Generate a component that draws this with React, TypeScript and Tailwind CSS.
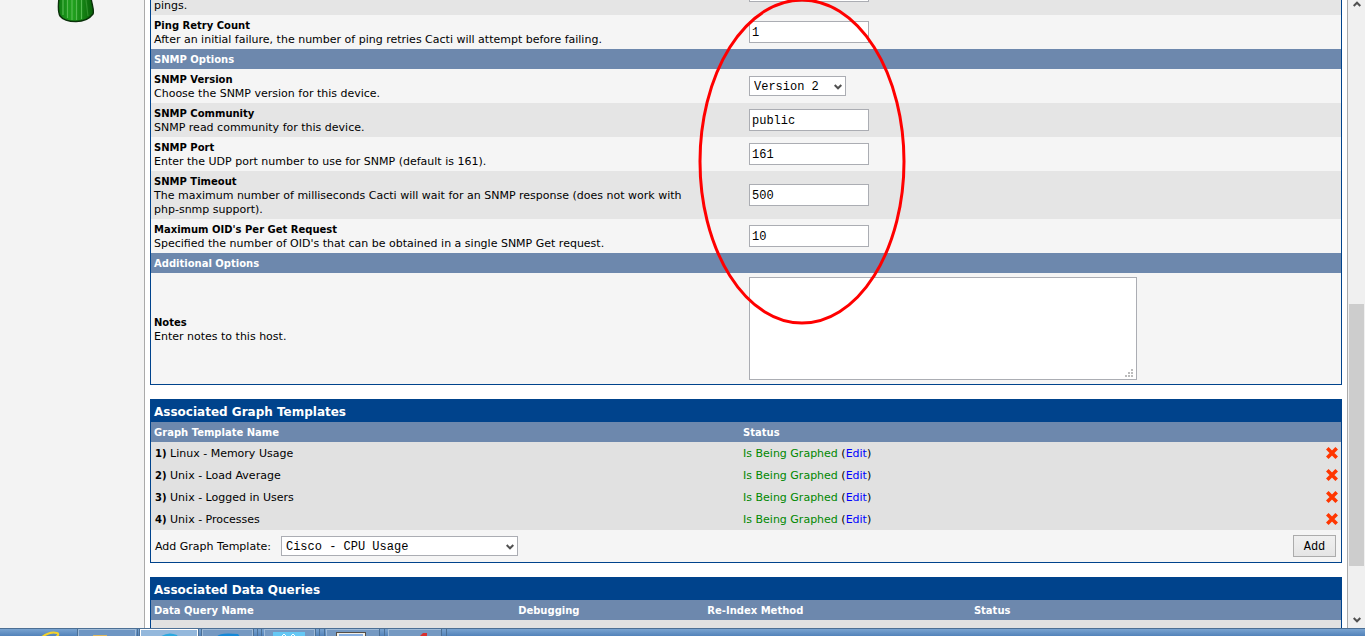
import { useState } from 'react'
import type { ReactNode } from 'react'

type Field = { id: string; label: string; hint: ReactNode; value: string; shade: string }

const snmpFields: Field[] = [
  { id: 'snmp_community', label: 'SNMP Community', hint: 'SNMP read community for this device.', value: 'public', shade: 'bg-[#e5e5e5]' },
  { id: 'snmp_port', label: 'SNMP Port', hint: 'Enter the UDP port number to use for SNMP (default is 161).', value: '161', shade: 'bg-[#f5f5f5]' },
  {
    id: 'snmp_timeout',
    label: 'SNMP Timeout',
    hint: <>The maximum number of milliseconds Cacti will wait for an SNMP response (does not work with<br />php-snmp support).</>,
    value: '500',
    shade: 'bg-[#e5e5e5]',
  },
  { id: 'max_oids', label: "Maximum OID's Per Get Request", hint: "Specified the number of OID's that can be obtained in a single SNMP Get request.", value: '10', shade: 'bg-[#f5f5f5]' },
]

const graphTemplates = ['Linux - Memory Usage', 'Unix - Load Average', 'Unix - Logged in Users', 'Unix - Processes']

const control = "border border-[#abadb3] bg-white font-['Liberation_Mono',monospace] text-xs text-black outline-none"

function FormRow({ id, label, hint, shade, children }: { id: string; label: string; hint: ReactNode; shade: string; children: ReactNode }) {
  return (
    <div className={`flex items-center ${shade}`}>
      <div className="w-1/2 px-[3px] pt-1 pb-[2px]">
        <label htmlFor={id} className="block text-[10px] leading-[14px] font-bold">{label}</label>
        <div>{hint}</div>
      </div>
      <div className="w-1/2 px-[3px] py-[3px]">{children}</div>
    </div>
  )
}

function TextField({ id, value }: { id: string; value: string }) {
  return <input id={id} type="text" defaultValue={value} className={`block h-[22px] w-[120px] px-[2px] pt-[2px] ${control}`} />
}

function Chevron({ className }: { className: string }) {
  return (
    <svg viewBox="0 0 8 6" className={className} fill="none" stroke="#505050" strokeWidth="2" aria-hidden="true">
      <path d="M0.7 1 L4 4.3 L7.3 1" />
    </svg>
  )
}

function Select({ id, options, width }: { id: string; options: string[]; width: string }) {
  return (
    <div className={`relative ${width}`}>
      <select id={id} className={`block h-5 w-full appearance-none px-1 pt-[2px] ${control}`}>
        {options.map(o => <option key={o}>{o}</option>)}
      </select>
      <Chevron className="pointer-events-none absolute top-[8px] right-1 h-[6px] w-2" />
    </div>
  )
}

function SectionBar({ title }: { title: string }) {
  return <h2 className="bg-[#6d88ad] px-[3px] pt-1 pb-[2px] text-[10px] leading-[14px] font-bold text-white">{title}</h2>
}

function PanelTitle({ title }: { title: string }) {
  return <h2 className="bg-[#00438c] px-[3px] pt-1 pb-[2px] text-xs leading-4 font-bold text-white">{title}</h2>
}

function DeleteIcon() {
  return (
    <svg viewBox="0 0 12 12" className="block size-3" fill="none" stroke="#ff3600" strokeWidth="3.6" aria-hidden="true">
      <path d="M1.3 1.3 L10.7 10.7 M10.7 1.3 L1.3 10.7" />
    </svg>
  )
}

function Cactus() {
  return (
    <svg viewBox="0 0 40 24" className="ml-[56px] block h-6 w-10" aria-hidden="true">
      <defs>
        <linearGradient id="cactus">
          <stop offset="0" stopColor="#0f7d12" />
          <stop offset="0.4" stopColor="#22a51f" />
          <stop offset="1" stopColor="#086008" />
        </linearGradient>
      </defs>
      <path d="M3 -2 C2 6 2 12 4 16 C7 20 13 21.5 20 21.5 C28 21.5 34 18 37 14 C38.5 11 36 5 35 -2 Z" fill="url(#cactus)" stroke="#0a300a" strokeWidth="1.4" />
      <g fill="none" stroke="#55b950" strokeWidth="1.2">
        <path d="M7 0 V15" />
        <path d="M11.5 0 V18" />
        <path d="M16 0 V20" />
        <path d="M20.5 0 V20" />
        <path d="M25.5 0 V19" />
      </g>
      <path d="M30 0 L32 16" fill="none" stroke="#2f8f2c" strokeWidth="1.2" />
    </svg>
  )
}

function Taskbar() {
  return (
    <div className="flex h-2 shrink-0 overflow-hidden border-t border-[#4c6f94] bg-linear-to-b from-[#79a3d0] to-[#5283ba]">
      <svg viewBox="0 0 460 7" className="h-[7px] w-[460px]" aria-hidden="true">
        <path d="M42 8 Q50 2 57 4 Q60 5 56 8" fill="none" stroke="#f5d228" strokeWidth="2" />
        <g stroke="#9fbbd8" fill="#7599c2">
          <rect x="78.5" y="0.5" width="57" height="9" fill="#6e96c3" />
          <rect x="140.5" y="0.5" width="57" height="9" stroke="#ffffff" fill="#94b8dc" />
          <rect x="202.5" y="0.5" width="50" height="9" />
          <rect x="264.5" y="0.5" width="50" height="9" />
          <rect x="326.5" y="0.5" width="53" height="9" />
          <rect x="388.5" y="0.5" width="53" height="9" />
        </g>
        <path d="M77.5 0V7M137.5 0V7M139.5 0V7M198.5 0V7M201.5 0V7M253.5 0V7M257.5 0V7M261.5 0V7M315.5 0V7M319.5 0V7M324.5 0V7M379.5 0V7M384.5 0V7M441.5 0V7M446.5 0V7" stroke="#4b6f95" />
        <rect x="93" y="6" width="14" height="2" fill="#e0b85c" />
        <path d="M160 8 Q168 2 177 6 L178 8Z" fill="#2ba9e0" />
        <path d="M217 8 Q218 3 238 5 L240 8Z" fill="#1689d8" />
        <rect x="273" y="3" width="32" height="5" fill="#65c8f5" />
        <path d="M282 7l2-2 2 2M291 7l2-2 2 2" stroke="#fff" fill="none" />
        <rect x="336.5" y="3.5" width="29" height="5" fill="#f1efe8" stroke="#554f48" />
        <rect x="339" y="5" width="24" height="3" fill="#86aee0" />
        <path d="M419 8 L423 4 H427 V8Z" fill="#d8302f" />
      </svg>
    </div>
  )
}

export default function App() {
  const [templates, setTemplates] = useState(graphTemplates)

  return (
    <div className="flex h-screen flex-col overflow-hidden bg-white font-['DejaVu_Sans',Verdana,sans-serif] text-[11px] leading-[14px] text-black">
      <div className="flex min-h-0 flex-1">
        <aside className="w-[145px] shrink-0 border-r border-[#aaaaaa] bg-[#f3f3f3]">
          <Cactus />
        </aside>

        <main className="relative min-w-0 flex-1 overflow-hidden px-[5px]">
          <form className="relative border-x border-b border-[#00438c]" onSubmit={e => e.preventDefault()}>
            <div className="flex h-[15px] items-end overflow-hidden bg-[#e5e5e5]">
              <label htmlFor="ping_timeout" className="w-1/2 px-[3px] pb-[2px]">pings.</label>
              <div className="w-1/2 px-[3px] pb-[13px]"><TextField id="ping_timeout" value="" /></div>
            </div>
            <FormRow id="ping_retries" label="Ping Retry Count" hint="After an initial failure, the number of ping retries Cacti will attempt before failing." shade="bg-[#f5f5f5]">
              <TextField id="ping_retries" value="1" />
            </FormRow>
            <SectionBar title="SNMP Options" />
            <FormRow id="snmp_version" label="SNMP Version" hint="Choose the SNMP version for this device." shade="bg-[#f5f5f5]">
              <Select id="snmp_version" options={['Version 2', 'Version 1', 'Version 3']} width="w-[97px]" />
            </FormRow>
            {snmpFields.map(f => (
              <FormRow key={f.id} id={f.id} label={f.label} hint={f.hint} shade={f.shade}>
                <TextField id={f.id} value={f.value} />
              </FormRow>
            ))}
            <SectionBar title="Additional Options" />
            <FormRow id="notes" label="Notes" hint="Enter notes to this host." shade="bg-[#f5f5f5]">
              <div className="relative my-px w-[388px]">
                <textarea id="notes" className={`block h-[103px] w-full resize-none p-[2px] ${control}`} />
                <svg viewBox="0 0 8 8" className="pointer-events-none absolute right-1 bottom-[3px] size-2" fill="#bcbcbc" aria-hidden="true">
                  <path d="M6 0h2v2h-2zM3 3h2v2h-2zM6 3h2v2h-2zM0 6h2v2h-2zM3 6h2v2h-2zM6 6h2v2h-2z" />
                </svg>
              </div>
            </FormRow>
            <svg viewBox="0 0 208 326" className="pointer-events-none absolute top-0 left-1/2 -ml-12 h-[326px] w-[208px]" aria-hidden="true">
              <ellipse cx="104" cy="161.5" rx="102" ry="161.5" fill="none" stroke="#ff0000" strokeWidth="3" />
            </svg>
          </form>

          <section className="mt-[14px] border border-[#00438c] bg-[#f5f5f5]">
            <PanelTitle title="Associated Graph Templates" />
            <table className="w-full table-fixed">
              <thead>
                <tr className="bg-[#6d88ad] text-left text-[10px] leading-[14px] text-white">
                  <th className="w-[49.5%] px-[3px] pt-1 pb-[2px]">Graph Template Name</th>
                  <th className="px-[3px] pt-1 pb-[2px]">Status</th>
                  <th className="w-[23px]" />
                </tr>
              </thead>
              <tbody>
                {templates.map((name, i) => (
                  <tr key={name} className="h-[22px] bg-[#e1e1e1]">
                    <td className="px-1 pt-[2px]"><b className="text-[10px]">{i + 1})</b> {name}</td>
                    <td className="px-[3px] pt-[2px] text-[#008800]">
                      Is Being Graphed <span className="text-black">(<a href="#edit" className="text-[#0000ff]">Edit</a>)</span>
                    </td>
                    <td className="pl-2">
                      <button type="button" aria-label={`Delete ${name}`} className="block" onClick={() => setTemplates(templates.filter(t => t !== name))}>
                        <DeleteIcon />
                      </button>
                    </td>
                  </tr>
                ))}
              </tbody>
            </table>
            <div className="flex h-8 items-center pr-[5px] pl-1">
              <label htmlFor="graph_template" className="mr-[10px] pt-[2px]">Add Graph Template:</label>
              <Select id="graph_template" options={['Cisco - CPU Usage']} width="w-[237px]" />
              <button type="button" className="ml-auto h-[22px] w-[43px] border border-[#acacac] bg-linear-to-b from-[#f0f0f0] to-[#e5e5e5] pt-px font-['Liberation_Mono',monospace] text-xs">Add</button>
            </div>
          </section>

          <section className="mt-[14px] border border-[#00438c] bg-[#e1e1e1]">
            <PanelTitle title="Associated Data Queries" />
            <table className="w-full table-fixed">
              <thead>
                <tr className="bg-[#6d88ad] text-left text-[10px] leading-[14px] text-white">
                  <th className="w-[30.6%] px-[3px] pt-1 pb-[2px]">Data Query Name</th>
                  <th className="w-[15.9%] px-[3px] pt-1 pb-[2px]">Debugging</th>
                  <th className="w-[22.4%] px-[3px] pt-1 pb-[2px]">Re-Index Method</th>
                  <th className="px-[3px] pt-1 pb-[2px]">Status</th>
                </tr>
              </thead>
              <tbody>
                <tr className="h-[22px]"><td colSpan={4} /></tr>
              </tbody>
            </table>
          </section>
        </main>

        <div className="flex w-[18px] shrink-0 flex-col border-l border-[#aaaaaa] bg-[#f0f0f0] pl-px">
          <Chevron className="mx-auto mt-px h-[6px] w-2 rotate-180" />
          <div className="mt-[297px] h-[262px] w-[15px] bg-[#cdcdcd]" />
          <Chevron className="mx-auto mt-auto mb-[5px] h-[6px] w-2" />
        </div>
      </div>
      <Taskbar />
    </div>
  )
}
